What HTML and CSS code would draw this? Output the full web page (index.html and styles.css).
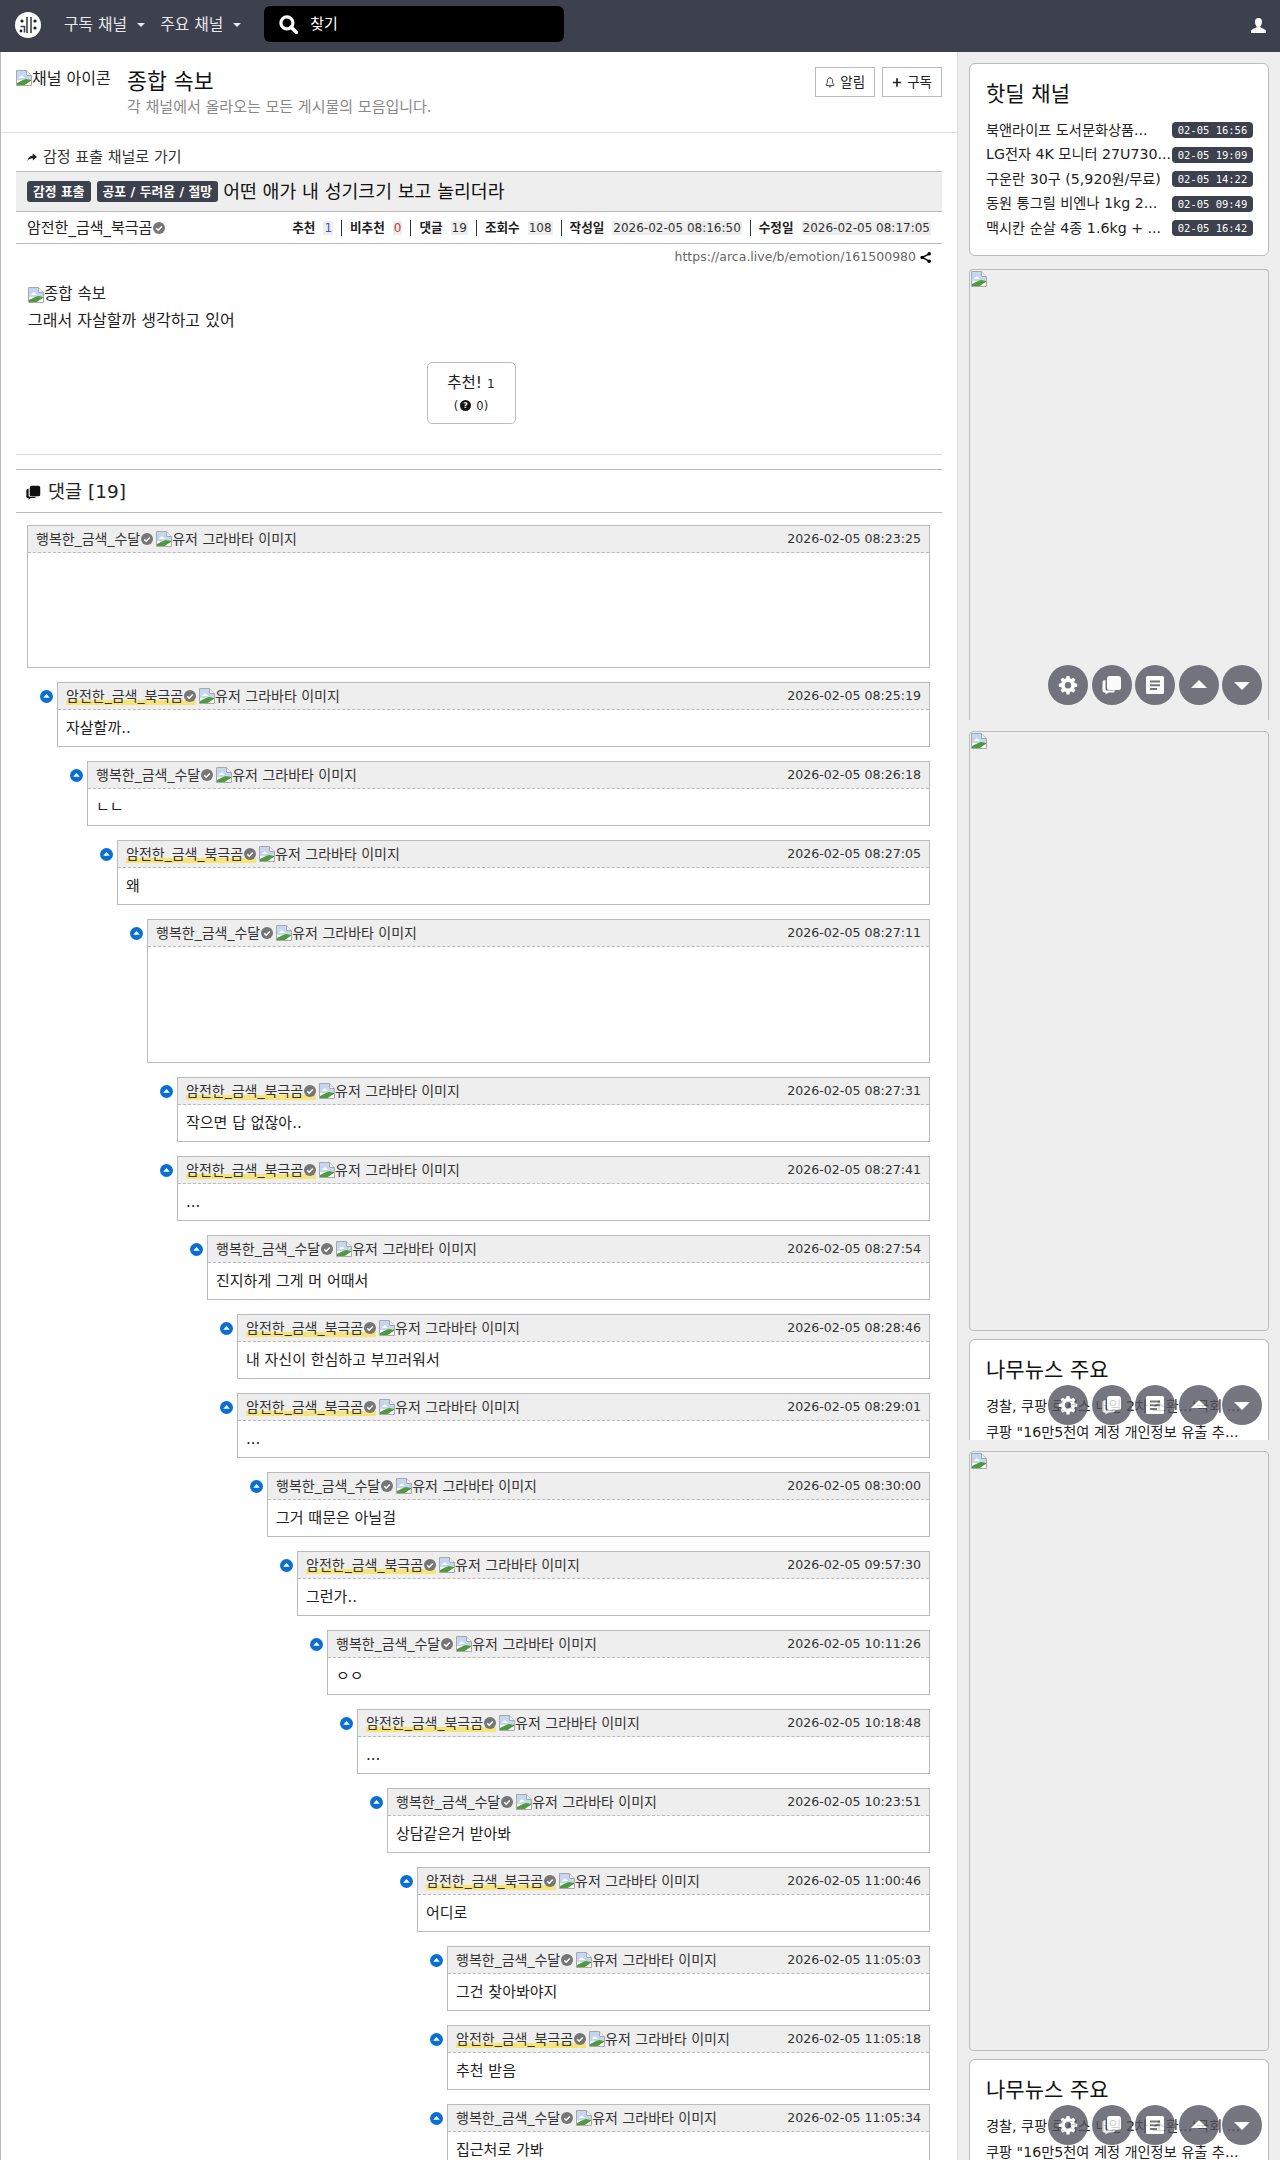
FILE: index.html
```html
<!DOCTYPE html>
<html lang="ko">
<head>
<meta charset="utf-8">
<title>어떤 애가 내 성기크기 보고 놀리더라</title>
<link rel="stylesheet" href="styles.css">
</head>
<body>
<svg class="defs" aria-hidden="true">
  <symbol id="broken" viewBox="0 0 16 16">
    <path d="M.5.5h10l5 5v10H.5z" fill="#fff" stroke="#a8a8a8"/>
    <path d="M10.5.5v5h5" fill="#eee" stroke="#a8a8a8"/>
    <path d="M1 1h9v5h5v4H1z" fill="#c4d7f2"/>
    <path d="M3 8c1-2 3-3 4-2l2 2z" fill="#fff"/>
    <path d="M1 15v-2l6-3 3-1 5 1v1L9 15z" fill="#4f9a3a"/>
    <path d="M9 15l6-4v4z" fill="#fff"/>
  </symbol>
  <symbol id="check" viewBox="0 0 16 16">
    <circle cx="8" cy="8" r="8" fill="#767676"/>
    <path d="M4.3 8.3l2.6 2.6 4.8-5" fill="none" stroke="#fff" stroke-width="2"/>
  </symbol>
  <symbol id="fold" viewBox="0 0 16 16">
    <circle cx="8" cy="8" r="8" fill="#0a6fd1"/>
    <path d="M8 5l4 4.5H4z" fill="#fff"/>
  </symbol>
  <symbol id="chats" viewBox="0 0 20 20">
    <rect x="5" y="1" width="14" height="14" rx="2.5"/>
    <path d="M3.5 5v9c0 1 .6 1.600 1.500 1.600h8.500l-2 1.800H6.500L3.500 19.500v-2.100H2.500C1.200 17.400.5 16.500.5 15.500V7c0-1.200 1.200-2 3-2z"/>
  </symbol>
</svg>

<header class="nav">
  <svg class="logo" viewBox="0 0 26 26"><circle cx="13" cy="13" r="13" fill="#fff"/><path d="M12 5v16M16 5v16M5.500 14.500h4v6" fill="none" stroke="#3d414d" stroke-width="1.600"/><circle cx="7" cy="9" r="1.600" fill="#1d1f26"/><circle cx="20" cy="9" r="1.600" fill="#1d1f26"/><circle cx="20" cy="16" r="1.600" fill="#1d1f26"/><circle cx="6" cy="19" r="1.400" fill="#1d1f26"/></svg>
  <a class="nav-link">구독 채널<i class="caret"></i></a>
  <a class="nav-link">주요 채널<i class="caret"></i></a>
  <div class="search">
    <svg class="search-icon" viewBox="0 0 18 18"><circle cx="7.500" cy="7.500" r="5.700" fill="none" stroke="#fff" stroke-width="3"/><path d="M11.500 11.500l5 5" stroke="#fff" stroke-width="3.400" stroke-linecap="round"/></svg>
    <span>찾기</span>
  </div>
  <svg class="user" viewBox="0 0 14 14"><path d="M7 0c2.200 0 3.300 1.500 3.300 3.600S9.300 7.400 8.600 8.200c0 1 3 1.400 5.400 3.400V14H0v-2.400c2.400-2 5.400-2.400 5.400-3.400C4.700 7.400 3.700 5.700 3.700 3.600S4.800 0 7 0z" fill="#fff"/></svg>
</header>

<div class="layout">
  <main class="main">
    <section class="board-head">
      <div class="board-icon"><svg class="bi"><use href="#broken"/></svg><span>채널 아이콘</span></div>
      <div class="board-text">
        <div class="board-title">종합 속보</div>
        <div class="board-desc">각 채널에서 올라오는 모든 게시물의 모음입니다.</div>
      </div>
      <div class="board-btns">
        <a class="btn"><svg class="btn-ic" viewBox="0 0 12 14"><path d="M6 1.500c-2.200 0-3 1.700-3 3.500 0 2.500-.8 3.800-1.700 4.700v.8h9.400v-.8C9.800 8.800 9 7.500 9 5c0-1.800-.8-3.500-3-3.500zM6 1.500V.5M4.800 11.500c.2.800.6 1.300 1.200 1.300s1-.5 1.200-1.300" fill="none" stroke="#222" stroke-width="1"/></svg>알림</a>
        <a class="btn"><svg class="btn-ic" viewBox="0 0 12 12"><path d="M6 1v10M1 6h10" stroke="#222" stroke-width="2"/></svg>구독</a>
      </div>
    </section>

    <article class="article">
      <div class="back"><svg class="back-ic" viewBox="0 0 12 10"><path d="M7 0l5 4.300L7 8.500V6C4 6 2 7 .5 9.500 1 5.500 3.500 3 7 2.500z" fill="#222"/></svg>감정 표출 채널로 가기</div>
      <h1 class="title"><span class="badge">감정 표출</span><span class="badge">공포 / 두려움 / 절망</span><span class="title-text">어떤 애가 내 성기크기 보고 놀리더라</span></h1>
      <div class="info">
        <span class="author">암전한_금색_북극곰<svg class="ck"><use href="#check"/></svg></span>
        <div class="stats">
          <span class="stat"><b>추천</b><em class="blue">1</em></span>
          <span class="stat"><b>비추천</b><em class="red">0</em></span>
          <span class="stat"><b>댓글</b><em>19</em></span>
          <span class="stat"><b>조회수</b><em>108</em></span>
          <span class="stat"><b>작성일</b><em>2026-02-05 08:16:50</em></span>
          <span class="stat"><b>수정일</b><em>2026-02-05 08:17:05</em></span>
        </div>
      </div>
      <div class="url">https://arca.live/b/emotion/161500980<svg class="share" viewBox="0 0 12 12"><path d="M10 2L2.500 6l7.500 4" fill="none" stroke="#111" stroke-width="1.700"/><circle cx="10" cy="2" r="1.900"/><circle cx="2.300" cy="6" r="1.900"/><circle cx="10" cy="10" r="1.900"/></svg></div>
      <div class="body">
        <p class="body-img"><svg class="bi"><use href="#broken"/></svg>종합 속보</p>
        <p class="body-line">그래서 자살할까 생각하고 있어</p>
      </div>
      <div class="vote-wrap">
        <a class="vote">
          <span class="vote-main">추천! <small>1</small></span>
          <span class="vote-sub">(<svg class="q" viewBox="0 0 14 14"><circle cx="7" cy="7" r="7" fill="#111"/><text x="7" y="10.800" text-anchor="middle" class="q-t">?</text></svg><span class="q-n">0)</span></span>
        </a>
      </div>
      <div class="hr"></div>
      <h2 class="cm-head"><svg class="cm-ic"><use href="#chats"/></svg>댓글 [19]</h2>

      <div class="comments">
        <div class="c" style="--d:0"><div class="c-h"><span class="who">행복한_금색_수달<svg class="ck"><use href="#check"/></svg></span><span class="ava"><svg class="bi"><use href="#broken"/></svg>유저 그라바타 이미지</span><time>2026-02-05 08:23:25</time></div><div class="c-b tall"></div></div>
        <div class="c" style="--d:1"><svg class="fold"><use href="#fold"/></svg><div class="c-h"><span class="who mark">암전한_금색_북극곰<svg class="ck"><use href="#check"/></svg></span><span class="ava"><svg class="bi"><use href="#broken"/></svg>유저 그라바타 이미지</span><time>2026-02-05 08:25:19</time></div><div class="c-b">자살할까..</div></div>
        <div class="c" style="--d:2"><svg class="fold"><use href="#fold"/></svg><div class="c-h"><span class="who">행복한_금색_수달<svg class="ck"><use href="#check"/></svg></span><span class="ava"><svg class="bi"><use href="#broken"/></svg>유저 그라바타 이미지</span><time>2026-02-05 08:26:18</time></div><div class="c-b">ㄴㄴ</div></div>
        <div class="c" style="--d:3"><svg class="fold"><use href="#fold"/></svg><div class="c-h"><span class="who mark">암전한_금색_북극곰<svg class="ck"><use href="#check"/></svg></span><span class="ava"><svg class="bi"><use href="#broken"/></svg>유저 그라바타 이미지</span><time>2026-02-05 08:27:05</time></div><div class="c-b">왜</div></div>
        <div class="c" style="--d:4"><svg class="fold"><use href="#fold"/></svg><div class="c-h"><span class="who">행복한_금색_수달<svg class="ck"><use href="#check"/></svg></span><span class="ava"><svg class="bi"><use href="#broken"/></svg>유저 그라바타 이미지</span><time>2026-02-05 08:27:11</time></div><div class="c-b tall"></div></div>
        <div class="c" style="--d:5"><svg class="fold"><use href="#fold"/></svg><div class="c-h"><span class="who mark">암전한_금색_북극곰<svg class="ck"><use href="#check"/></svg></span><span class="ava"><svg class="bi"><use href="#broken"/></svg>유저 그라바타 이미지</span><time>2026-02-05 08:27:31</time></div><div class="c-b">작으면 답 없잖아..</div></div>
        <div class="c" style="--d:5"><svg class="fold"><use href="#fold"/></svg><div class="c-h"><span class="who mark">암전한_금색_북극곰<svg class="ck"><use href="#check"/></svg></span><span class="ava"><svg class="bi"><use href="#broken"/></svg>유저 그라바타 이미지</span><time>2026-02-05 08:27:41</time></div><div class="c-b">...</div></div>
        <div class="c" style="--d:6"><svg class="fold"><use href="#fold"/></svg><div class="c-h"><span class="who">행복한_금색_수달<svg class="ck"><use href="#check"/></svg></span><span class="ava"><svg class="bi"><use href="#broken"/></svg>유저 그라바타 이미지</span><time>2026-02-05 08:27:54</time></div><div class="c-b">진지하게 그게 머 어때서</div></div>
        <div class="c" style="--d:7"><svg class="fold"><use href="#fold"/></svg><div class="c-h"><span class="who mark">암전한_금색_북극곰<svg class="ck"><use href="#check"/></svg></span><span class="ava"><svg class="bi"><use href="#broken"/></svg>유저 그라바타 이미지</span><time>2026-02-05 08:28:46</time></div><div class="c-b">내 자신이 한심하고 부끄러워서</div></div>
        <div class="c" style="--d:7"><svg class="fold"><use href="#fold"/></svg><div class="c-h"><span class="who mark">암전한_금색_북극곰<svg class="ck"><use href="#check"/></svg></span><span class="ava"><svg class="bi"><use href="#broken"/></svg>유저 그라바타 이미지</span><time>2026-02-05 08:29:01</time></div><div class="c-b">...</div></div>
        <div class="c" style="--d:8"><svg class="fold"><use href="#fold"/></svg><div class="c-h"><span class="who">행복한_금색_수달<svg class="ck"><use href="#check"/></svg></span><span class="ava"><svg class="bi"><use href="#broken"/></svg>유저 그라바타 이미지</span><time>2026-02-05 08:30:00</time></div><div class="c-b">그거 때문은 아닐걸</div></div>
        <div class="c" style="--d:9"><svg class="fold"><use href="#fold"/></svg><div class="c-h"><span class="who mark">암전한_금색_북극곰<svg class="ck"><use href="#check"/></svg></span><span class="ava"><svg class="bi"><use href="#broken"/></svg>유저 그라바타 이미지</span><time>2026-02-05 09:57:30</time></div><div class="c-b">그런가..</div></div>
        <div class="c" style="--d:10"><svg class="fold"><use href="#fold"/></svg><div class="c-h"><span class="who">행복한_금색_수달<svg class="ck"><use href="#check"/></svg></span><span class="ava"><svg class="bi"><use href="#broken"/></svg>유저 그라바타 이미지</span><time>2026-02-05 10:11:26</time></div><div class="c-b">ㅇㅇ</div></div>
        <div class="c" style="--d:11"><svg class="fold"><use href="#fold"/></svg><div class="c-h"><span class="who mark">암전한_금색_북극곰<svg class="ck"><use href="#check"/></svg></span><span class="ava"><svg class="bi"><use href="#broken"/></svg>유저 그라바타 이미지</span><time>2026-02-05 10:18:48</time></div><div class="c-b">...</div></div>
        <div class="c" style="--d:12"><svg class="fold"><use href="#fold"/></svg><div class="c-h"><span class="who">행복한_금색_수달<svg class="ck"><use href="#check"/></svg></span><span class="ava"><svg class="bi"><use href="#broken"/></svg>유저 그라바타 이미지</span><time>2026-02-05 10:23:51</time></div><div class="c-b">상담같은거 받아봐</div></div>
        <div class="c" style="--d:13"><svg class="fold"><use href="#fold"/></svg><div class="c-h"><span class="who mark">암전한_금색_북극곰<svg class="ck"><use href="#check"/></svg></span><span class="ava"><svg class="bi"><use href="#broken"/></svg>유저 그라바타 이미지</span><time>2026-02-05 11:00:46</time></div><div class="c-b">어디로</div></div>
        <div class="c" style="--d:14"><svg class="fold"><use href="#fold"/></svg><div class="c-h"><span class="who">행복한_금색_수달<svg class="ck"><use href="#check"/></svg></span><span class="ava"><svg class="bi"><use href="#broken"/></svg>유저 그라바타 이미지</span><time>2026-02-05 11:05:03</time></div><div class="c-b">그건 찾아봐야지</div></div>
        <div class="c" style="--d:14"><svg class="fold"><use href="#fold"/></svg><div class="c-h"><span class="who mark">암전한_금색_북극곰<svg class="ck"><use href="#check"/></svg></span><span class="ava"><svg class="bi"><use href="#broken"/></svg>유저 그라바타 이미지</span><time>2026-02-05 11:05:18</time></div><div class="c-b">추천 받음</div></div>
        <div class="c" style="--d:14"><svg class="fold"><use href="#fold"/></svg><div class="c-h"><span class="who">행복한_금색_수달<svg class="ck"><use href="#check"/></svg></span><span class="ava"><svg class="bi"><use href="#broken"/></svg>유저 그라바타 이미지</span><time>2026-02-05 11:05:34</time></div><div class="c-b">집근처로 가봐</div></div>
      </div>
    </article>
  </main>

  <aside class="side">
    <section class="card deal">
      <div class="card-title">핫딜 채널</div>
      <ul class="deal-list">
        <li><span class="deal-t">북앤라이프 도서문화상품...</span><span class="stamp">02-05 16:56</span></li>
        <li><span class="deal-t">LG전자 4K 모니터 27U730...</span><span class="stamp">02-05 19:09</span></li>
        <li><span class="deal-t">구운란 30구 (5,920원/무료)</span><span class="stamp">02-05 14:22</span></li>
        <li><span class="deal-t">동원 통그릴 비엔나 1kg 2...</span><span class="stamp">02-05 09:49</span></li>
        <li><span class="deal-t">맥시칸 순살 4종 1.6kg + ...</span><span class="stamp">02-05 16:42</span></li>
      </ul>
    </section>
    <section class="ad ad-short"><svg class="bi"><use href="#broken"/></svg></section>
    <section class="ad ad-tall"><svg class="bi"><use href="#broken"/></svg></section>
    <section class="card news">
      <div class="card-title">나무뉴스 주요</div>
      <div class="news-line">경찰, 쿠팡 로저스 내일 2차 소환...'국회 ...</div>
      <div class="news-line">쿠팡 "16만5천여 계정 개인정보 유출 추...</div>
    </section>
    <section class="ad ad-tall"><svg class="bi"><use href="#broken"/></svg></section>
    <section class="card news">
      <div class="card-title">나무뉴스 주요</div>
      <div class="news-line">경찰, 쿠팡 로저스 내일 2차 소환...'국회 ...</div>
      <div class="news-line">쿠팡 "16만5천여 계정 개인정보 유출 추...</div>
    </section>

    <div class="fabs fabs-1">
      <a class="fab"><svg viewBox="0 0 20 20"><path d="M8.500 1h3l.4 2.300 1.500.7 2-1.300 2.100 2.100-1.300 2 .7 1.500 2.300.4v3l-2.300.4-.7 1.500 1.300 2-2.100 2.100-2-1.300-1.500.7-.4 2.300h-3l-.4-2.300-1.500-.7-2 1.300L2.500 15.600l1.300-2-.7-1.500L.8 11.700v-3l2.300-.4.7-1.500-1.300-2 2.100-2.100 2 1.300 1.500-.7zM10 7a3.200 3.200 0 100 6.400A3.200 3.200 0 0010 7z" fill="#fff" fill-rule="evenodd"/></svg></a>
      <a class="fab"><svg class="lite"><use href="#chats"/></svg></a>
      <a class="fab"><svg viewBox="0 0 20 20"><path d="M2.500 1h15A1.500 1.500 0 0119 2.500v15a1.500 1.500 0 01-1.500 1.500h-15A1.500 1.500 0 011 17.500v-15A1.500 1.500 0 012.500 1zM5 5.500v2h10v-2zm0 3.700v2h10v-2zm0 3.700v2h7v-2z" fill="#fff" fill-rule="evenodd"/></svg></a>
      <a class="fab"><svg viewBox="0 0 20 20"><path d="M10 5l8 8H2z" fill="#fff"/></svg></a>
      <a class="fab"><svg viewBox="0 0 20 20"><path d="M10 15l-8-8h16z" fill="#fff"/></svg></a>
    </div>
    <div class="fabs fabs-2">
      <a class="fab"><svg viewBox="0 0 20 20"><path d="M8.500 1h3l.4 2.300 1.500.7 2-1.300 2.100 2.100-1.300 2 .7 1.500 2.300.4v3l-2.300.4-.7 1.500 1.300 2-2.100 2.100-2-1.300-1.500.7-.4 2.300h-3l-.4-2.300-1.500-.7-2 1.300L2.500 15.600l1.300-2-.7-1.500L.8 11.700v-3l2.300-.4.7-1.500-1.300-2 2.100-2.100 2 1.300 1.500-.7zM10 7a3.200 3.200 0 100 6.400A3.200 3.200 0 0010 7z" fill="#fff" fill-rule="evenodd"/></svg></a>
      <a class="fab"><svg class="lite"><use href="#chats"/></svg></a>
      <a class="fab"><svg viewBox="0 0 20 20"><path d="M2.500 1h15A1.500 1.500 0 0119 2.500v15a1.500 1.500 0 01-1.500 1.500h-15A1.500 1.500 0 011 17.500v-15A1.500 1.500 0 012.500 1zM5 5.500v2h10v-2zm0 3.700v2h10v-2zm0 3.700v2h7v-2z" fill="#fff" fill-rule="evenodd"/></svg></a>
      <a class="fab"><svg viewBox="0 0 20 20"><path d="M10 5l8 8H2z" fill="#fff"/></svg></a>
      <a class="fab"><svg viewBox="0 0 20 20"><path d="M10 15l-8-8h16z" fill="#fff"/></svg></a>
    </div>
    <div class="fabs fabs-3">
      <a class="fab"><svg viewBox="0 0 20 20"><path d="M8.500 1h3l.4 2.300 1.500.7 2-1.300 2.100 2.100-1.300 2 .7 1.500 2.300.4v3l-2.300.4-.7 1.500 1.300 2-2.100 2.100-2-1.300-1.500.7-.4 2.300h-3l-.4-2.300-1.500-.7-2 1.300L2.500 15.600l1.300-2-.7-1.500L.8 11.700v-3l2.300-.4.7-1.500-1.300-2 2.100-2.100 2 1.300 1.500-.7zM10 7a3.200 3.200 0 100 6.400A3.200 3.200 0 0010 7z" fill="#fff" fill-rule="evenodd"/></svg></a>
      <a class="fab"><svg class="lite"><use href="#chats"/></svg></a>
      <a class="fab"><svg viewBox="0 0 20 20"><path d="M2.500 1h15A1.500 1.500 0 0119 2.500v15a1.500 1.500 0 01-1.500 1.500h-15A1.500 1.500 0 011 17.500v-15A1.500 1.500 0 012.500 1zM5 5.500v2h10v-2zm0 3.700v2h10v-2zm0 3.700v2h7v-2z" fill="#fff" fill-rule="evenodd"/></svg></a>
      <a class="fab"><svg viewBox="0 0 20 20"><path d="M10 5l8 8H2z" fill="#fff"/></svg></a>
      <a class="fab"><svg viewBox="0 0 20 20"><path d="M10 15l-8-8h16z" fill="#fff"/></svg></a>
    </div>
  </aside>
</div>
</body>
</html>
```

FILE: styles.css
```css
* { box-sizing: border-box; }
html, body { margin: 0; height: 2160px; overflow: hidden; }
body {
  font-family: "DejaVu Sans", "Noto Sans CJK KR", sans-serif;
  font-size: 14px;
  line-height: 1.5;
  color: #212529;
  background: #fff;
}
.defs { display: none; }
.nav {
  height: 52px;
  background: #3d414d;
  display: flex;
  align-items: center;
  padding: 0 14px 2px 15px;
  color: #fff;
}
.logo { width: 26px; height: 26px; margin-right: 23px; }
.nav-link { font-size: 15.800px; color: #e8e9ec; display: flex; align-items: center; margin-right: 15px; }
.caret { margin-left: 10px; border: 4px solid transparent; border-top-color: #e8e9ec; border-bottom: 0; width: 0; height: 0; }
.search {
  margin: 0 0 2px 8px;
  width: 300px;
  height: 36px;
  background: #000;
  border-radius: 6px;
  display: flex;
  align-items: center;
  padding-left: 15px;
  font-size: 15px;
}
.search-icon { width: 19px; height: 19px; margin-right: 12px; }
.user { width: 15px; height: 15px; margin-left: auto; }

.layout { display: flex; height: 2108px; overflow: hidden; }
.main { width: 958px; flex: none; border-left: 1px solid #bbb; border-right: 1px solid #ddd; }
.side { width: 322px; min-width: 0; flex: none; background: #eee; padding: 11px 11px 0; position: relative; }

.board-head {
  height: 81px;
  border-bottom: 1px solid #ddd;
  display: flex;
  padding: 0 15px;
}
.bi { width: 16px; height: 16px; flex: none; vertical-align: top; }
.board-icon { width: 95px; overflow: hidden; white-space: nowrap; font-size: 16px; margin-top: 15px; height: 50px; flex: none; color: #222; }
.board-icon .bi { margin-top: 3px; }
.board-text { margin-left: 16px; padding-top: 15px; }
.board-title { font-size: 21.700px; line-height: 30px; color: #111; }
.board-desc { font-size: 15px; line-height: 20px; color: #888; margin-top: 0; }
.board-btns { margin-left: auto; display: flex; gap: 7px; padding-top: 15px; align-items: flex-start; }
.btn { height: 30px; border: 1px solid #bbb; display: flex; align-items: center; padding: 0 9px; font-size: 13.500px; color: #222; }
.btn-ic { width: 10px; height: 13px; margin-right: 5px; }

.article { padding: 0 15px; }
.back { height: 38px; padding: 10px 0 0 11px; font-size: 15px; line-height: 20px; display: flex; align-items: center; color: #333; }
.back-ic { width: 10px; height: 9px; margin-right: 6px; }
.title {
  margin: 0;
  height: 41px;
  background: #eee;
  border-top: 1px solid #bbb;
  border-bottom: 1px solid #bbb;
  display: flex;
  align-items: center;
  padding: 0 11px;
  font-weight: 400;
  font-size: 18.300px;
  color: #111;
}
.badge {
  background: #3d414d;
  color: #fff;
  border-radius: 3px;
  font-size: 12.800px;
  font-weight: 700;
  line-height: 21px;
  height: 21px;
  padding: 0 6px;
  margin-right: 6px;
  flex: none;
}
.title-text { margin-left: -1px; }
.info {
  height: 32px;
  border-bottom: 1px solid #bbb;
  display: flex;
  align-items: center;
  justify-content: space-between;
  padding: 0 11px;
}
.author { font-size: 15px; color: #222; padding-top: 2px; }
.ck { width: 12px; height: 12px; margin-left: 1px; vertical-align: -1px; }
.stats { display: flex; font-size: 12px; line-height: 16px; }
.stat { padding: 0 8px; border-left: 1px solid #333; }
.stat:first-child { border-left: 0; }
.stat:last-child { padding-right: 0; }
.stat b { font-size: 12.600px; font-weight: 700; margin-right: 8px; color: #222; }
.stat em { font-style: normal; background: #eee; padding: 0 1px; color: #333; }
.stat em.blue { color: #3a55c8; }
.stat em.red { color: #c03838; }
.url { height: 26px; display: flex; justify-content: flex-end; align-items: center; padding-right: 11px; font-size: 12.500px; color: #666; }
.share { width: 11px; height: 11px; margin-left: 4px; }
.body { padding: 0 12px; height: 80px; }
.body-img { margin: 12px 0 0; height: 25px; display: flex; align-items: center; font-size: 15.500px; color: #222; }
.body-line { margin: 2px 0 0; font-size: 16px; line-height: 24px; color: #222; }
.vote-wrap { display: flex; justify-content: center; padding-right: 16px; }
.vote {
  width: 89px;
  height: 62px;
  border: 1px solid #bbb;
  border-radius: 5px;
  display: flex;
  flex-direction: column;
  align-items: center;
  justify-content: center;
  color: #222;
}
.vote-main { font-size: 15.500px; line-height: 24px; }
.vote-main small { font-size: 12px; }
.vote-sub { font-size: 11.500px; line-height: 20px; display: flex; align-items: center; gap: 1px; }
.q { width: 11px; height: 11px; margin: 0 1px; }
.q-n { margin-left: 3px; }
.q-t { font: 700 10px "DejaVu Sans", sans-serif; fill: #fff; }
.hr { height: 1px; background: #ddd; margin-top: 30px; }
.cm-head {
  margin: 14px 0 0;
  height: 44px;
  border-top: 1px solid #bbb;
  border-bottom: 1px solid #bbb;
  display: flex;
  align-items: center;
  padding: 2px 0 0 10px;
  font-size: 18.500px;
  font-weight: 400;
  color: #222;
}
.cm-ic { width: 15px; height: 15px; margin-right: 7px; fill: #111; }
.comments { padding: 12px 12px 0 11px; display: flex; flex-direction: column; gap: 14px; }
.c {
  margin-left: calc(var(--d) * 30px);
  border: 1px solid #bbb;
  position: relative;
  flex: none;
}
.fold { width: 13px; height: 13px; position: absolute; left: -18px; top: 7px; }
.c-h {
  height: 27px;
  background: #eee;
  border-bottom: 1px dashed #bbb;
  display: flex;
  align-items: center;
  padding: 0 8px;
  font-size: 14px;
  color: #333;
}
.c-h time { font-size: 12.600px; margin-left: auto; }
.who { white-space: nowrap; }
.who.mark { background: linear-gradient(transparent 65%, #f7e479 65%, #f7e479 92%, transparent 92%); }
.ava { margin-left: 3px; display: flex; align-items: center; white-space: nowrap; }
.c-b { height: 36px; padding: 0 8px; font-size: 15px; line-height: 36px; color: #222; }
.c-b.tall { height: 115px; }
.c:first-child .c-b.tall { height: 114px; }

.card { background: #fff; border: 1px solid #bbb; border-radius: 6px; padding: 16px 15px 16px 16px; }
.card-title { font-size: 21px; line-height: 28px; color: #111; }
.deal { height: 193px; }
.deal-list { list-style: none; margin: 10px 0 0; padding: 0; }
.deal-list li { display: flex; align-items: center; justify-content: space-between; height: 24.500px; font-size: 14.200px; color: #222; }
.deal-t { white-space: nowrap; }
.stamp {
  background: #3d414d;
  color: #fff;
  font: 10.500px/16px "DejaVu Sans Mono", monospace;
  width: 81px;
  height: 16px;
  border-radius: 4px;
  text-align: center;
  flex: none;
}
.ad { background: #eee; border: 1px solid #bbb; border-radius: 4px; overflow: hidden; }
.ad .bi { display: block; margin: 1px 0 0 1px; }
.ad-short { height: 451px; margin-top: 13px; border-bottom: 0; border-radius: 4px 4px 0 0; }
.ad-tall { height: 600px; margin-top: 11px; }
.news { height: 101px; margin-top: 8px; overflow: hidden; border-bottom: 0; border-radius: 6px 6px 0 0; }
.news-line { font-size: 14.200px; line-height: 26px; white-space: nowrap; color: #222; }
.news .card-title + .news-line { margin-top: 9px; }

.fabs { position: absolute; right: 18px; display: flex; gap: 3.500px; }
.fabs-1 { top: 613px; }
.fabs-2 { top: 1333px; }
.fabs-3 { top: 2053px; }
.fab { width: 40px; height: 40px; border-radius: 50%; background: #545561; opacity: .8; display: flex; align-items: center; justify-content: center; }
.fab svg { width: 20px; height: 20px; }
.fab svg.lite { fill: #fff; }
```
